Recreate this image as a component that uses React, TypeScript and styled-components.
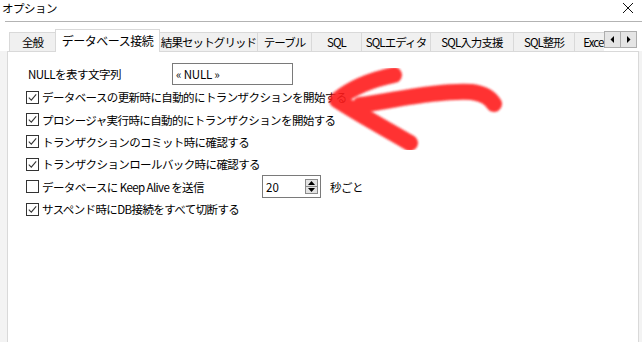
import React from "react";
import styled, { createGlobalStyle } from "styled-components";

const GlobalStyle = createGlobalStyle`
  html, body {
    margin: 0;
    padding: 0;
    background: #ffffff;
  }
  body {
    font-family: "Noto Sans CJK JP", "Noto Sans", sans-serif;
    font-size: 11.5px;
    color: #000;
  }
`;

const Window = styled.div`
  position: relative;
  width: 642px;
  height: 342px;
  display: flex;
  flex-direction: column;
  overflow: hidden;
  background: #fff;
`;

const TitleBar = styled.div`
  height: 21px;
  display: flex;
  align-items: center;
  justify-content: space-between;
  padding: 0 8px 0 2px;
  box-sizing: border-box;
`;

const Title = styled.span`
  font-size: 11.5px;
  letter-spacing: -0.5px;
  line-height: 1;
  margin-top: -4px;
`;

const CloseButton = styled.div`
  width: 12px;
  height: 12px;
  margin-top: -5px;
  display: flex;
`;

const Separator = styled.div`
  height: 1px;
  margin-left: 5px;
  background: #b3b3b3;
`;

const TabHeader = styled.div`
  display: flex;
  padding-left: 9px;
  height: 30px;
  margin-bottom: -1px;
  position: relative;
  z-index: 1;
`;

const TabsViewport = styled.div`
  width: 595px;
  height: 30px;
  overflow: hidden;
  display: flex;
  align-items: flex-end;
`;

const Tab = styled.div<{ $w: number; $active?: boolean }>`
  flex: none;
  box-sizing: border-box;
  width: ${(p) => p.$w}px;
  height: ${(p) => (p.$active ? 23 : 19)}px;
  margin-bottom: ${(p) => (p.$active ? 0 : 1)}px;
  margin-right: -1px;
  border: 1px solid #d9d9d9;
  border-bottom: none;
  background: ${(p) => (p.$active ? "#ffffff" : "#f0f0f0")};
  position: relative;
  z-index: ${(p) => (p.$active ? 2 : 1)};
  display: flex;
  align-items: center;
  justify-content: center;
  padding-top: ${(p) => (p.$active ? 0 : 1)}px;
  white-space: nowrap;
  font-size: ${(p) => (p.$active ? 12 : 11.5)}px;
  letter-spacing: ${(p) => (p.$active ? -0.5 : -0.9)}px;
  line-height: 1;
`;

const ScrollButtons = styled.div`
  display: flex;
  margin-top: 9px;
  height: 17px;
`;

const ScrollButton = styled.div`
  width: 17px;
  height: 17px;
  box-sizing: border-box;
  border: 1px solid #adadad;
  background: #e5e5e5;
  margin-right: -1px;
  display: flex;
  align-items: center;
  justify-content: center;
`;

const PanelWrap = styled.div`
  flex: 1;
  display: flex;
  padding: 0 3px 0 7px;
  background: #f3f3f3;
`;

const Panel = styled.div`
  flex: 1;
  background: #fff;
  border: 1px solid #d9d9d9;
  border-bottom: none;
  padding: 11px 0 0 18px;
  display: flex;
  flex-direction: column;
`;

const FieldRow = styled.div`
  height: 23px;
  display: flex;
  align-items: flex-start;
`;

const FieldLabel = styled.span`
  width: 144px;
  margin-left: 2px;
  line-height: 22px;
  letter-spacing: -0.5px;
`;

const TextBox = styled.div`
  box-sizing: border-box;
  width: 121px;
  height: 22px;
  border: 1px solid #7a7a7a;
  display: flex;
  align-items: center;
  padding-left: 3px;
  letter-spacing: -0.2px;
  white-space: pre;
`;

const CheckRow = styled.div`
  height: 22.4px;
  display: flex;
  align-items: center;
`;

const CheckLabel = styled.label<{ $w?: number }>`
  display: flex;
  align-items: center;
  gap: 3px;
  width: ${(p) => (p.$w ? `${p.$w}px` : "auto")};
  letter-spacing: -0.6px;
  white-space: pre;
`;

const Box = styled.span`
  width: 13px;
  height: 13px;
  box-sizing: border-box;
  border: 1px solid #333;
  background: #fff;
  display: flex;
  flex: none;
`;

const SpinBox = styled.div`
  box-sizing: border-box;
  width: 59px;
  height: 23px;
  border: 1px solid #7a7a7a;
  display: flex;
  align-items: center;
  justify-content: space-between;
  padding: 0 2px 0 3px;
`;

const SpinButtons = styled.div`
  display: flex;
  flex-direction: column;
`;

const SpinButton = styled.div`
  width: 13px;
  height: 8px;
  box-sizing: border-box;
  border: 1px solid #8a8a8a;
  background: #e3e3e3;
  margin-top: -1px;
  display: flex;
  align-items: center;
  justify-content: center;
  &:first-child {
    margin-top: 0;
  }
`;

const Unit = styled.span`
  margin-left: 9px;
  letter-spacing: -0.5px;
`;

const ArrowOverlay = styled.svg`
  position: absolute;
  left: 0;
  top: 0;
  pointer-events: none;
`;

const Check = ({ checked }: { checked: boolean }) => (
  <Box>
    {checked && (
      <svg width="11" height="11" viewBox="0 0 11 11">
        <path d="M1.8 5.6 L4.3 8.1 L9.2 2.4" fill="none" stroke="#333" strokeWidth="1.1" />
      </svg>
    )}
  </Box>
);

const tabs = [
  { label: "全般", w: 47 },
  { label: "データベース接続", w: 105, active: true },
  { label: "結果セットグリッド", w: 99 },
  { label: "テーブル", w: 55 },
  { label: "SQL", w: 51 },
  { label: "SQLエディタ", w: 70 },
  { label: "SQL入力支援", w: 84 },
  { label: "SQL整形", w: 62 },
  { label: "Excel", w: 41 },
];

const options = [
  { label: "データベースの更新時に自動的にトランザクションを開始する", checked: true },
  { label: "プロシージャ実行時に自動的にトランザクションを開始する", checked: true },
  { label: "トランザクションのコミット時に確認する", checked: true },
  { label: "トランザクションロールバック時に確認する", checked: true },
  { label: "データベースに Keep Alive を送信", checked: false, spin: true },
  { label: "サスペンド時にDB接続をすべて切断する", checked: true },
];

export default function App() {
  return (
    <>
      <GlobalStyle />
      <Window>
        <TitleBar>
          <Title>オプション</Title>
          <CloseButton>
            <svg width="12" height="12" viewBox="0 0 12 12">
              <path d="M1 1 L11 11 M11 1 L1 11" stroke="#111" strokeWidth="1" />
            </svg>
          </CloseButton>
        </TitleBar>
        <Separator />
        <TabHeader>
          <TabsViewport>
            {tabs.map((t) => (
              <Tab key={t.label} $w={t.w} $active={t.active}>
                {t.label}
              </Tab>
            ))}
          </TabsViewport>
          <ScrollButtons>
            <ScrollButton>
              <svg width="5" height="7" viewBox="0 0 5 7">
                <path d="M4 0 L4 7 L0.5 3.5 Z" fill="#000" />
              </svg>
            </ScrollButton>
            <ScrollButton>
              <svg width="5" height="7" viewBox="0 0 5 7">
                <path d="M1 0 L1 7 L4.5 3.5 Z" fill="#000" />
              </svg>
            </ScrollButton>
          </ScrollButtons>
        </TabHeader>
        <PanelWrap>
          <Panel>
            <FieldRow>
              <FieldLabel>NULLを表す文字列</FieldLabel>
              <TextBox>« NULL »</TextBox>
            </FieldRow>
            {options.map((o) => (
              <CheckRow key={o.label}>
                <CheckLabel $w={o.spin ? 236 : undefined}>
                  <Check checked={o.checked} />
                  {o.label}
                </CheckLabel>
                {o.spin && (
                  <>
                    <SpinBox>
                      <span>20</span>
                      <SpinButtons>
                        <SpinButton>
                          <svg width="7" height="4" viewBox="0 0 7 4">
                            <path d="M0 4 L7 4 L3.5 0 Z" fill="#000" />
                          </svg>
                        </SpinButton>
                        <SpinButton>
                          <svg width="7" height="4" viewBox="0 0 7 4">
                            <path d="M0 0 L7 0 L3.5 4 Z" fill="#000" />
                          </svg>
                        </SpinButton>
                      </SpinButtons>
                    </SpinBox>
                    <Unit>秒ごと</Unit>
                  </>
                )}
              </CheckRow>
            ))}
          </Panel>
        </PanelWrap>
        <ArrowOverlay width="642" height="342" viewBox="0 0 642 342">
          <defs>
            <filter id="soft" x="-10%" y="-10%" width="120%" height="120%">
              <feGaussianBlur stdDeviation="0.9" />
            </filter>
          </defs>
          <g
            fill="none"
            stroke="#ff1f1f"
            strokeWidth="16"
            strokeLinecap="round"
            strokeLinejoin="round"
            opacity="0.9"
            filter="url(#soft)"
          >
            <path d="M394 75 C370 80 350 89 337 100 C360 115 388 130 410 143" />
            <path d="M360 105 C395 100 440 90 472 92 C485 94 490 98 494 104" />
          </g>
        </ArrowOverlay>
      </Window>
    </>
  );
}
